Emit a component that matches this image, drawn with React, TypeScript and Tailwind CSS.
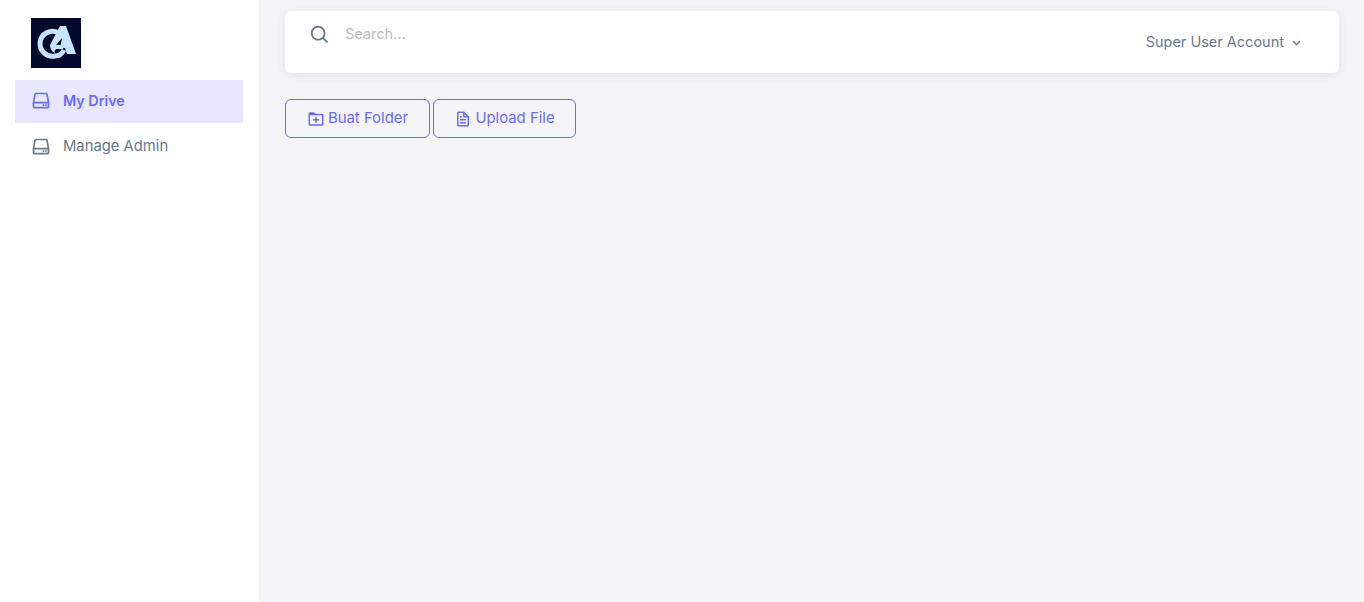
import { BiChevronDown, BiFile, BiFolderPlus, BiHdd, BiSearch } from 'react-icons/bi'

function Logo() {
  return (
    <div className="w-[50px] h-[50px] bg-[#03082e] ml-4">
      <svg viewBox="0 0 50 50" className="w-full h-full">
        <path d="M27 14.5 A12.5 12.5 0 1 0 24 38 C28 38 31 36 33 32" fill="none" stroke="#c8e4fb" strokeWidth="5" />
        <path d="M19 27 L33 27 L32 31 L27 31 C24 31 23 33 24 35 L22 34 C20 32 19 30 19 27 Z" fill="#c8e4fb" />
        <path d="M29 8 L35 8 L45 36 L36 36 L34 30 L29 30 L31 20 L25 27 L19 27 Z" fill="#c8e4fb" />
      </svg>
    </div>
  )
}

function SideItem({ label, active }: { label: string; active?: boolean }) {
  return (
    <a
      href="#"
      className={
        active
          ? 'flex items-center h-[43px] pl-[16px] pb-[2px] bg-[#e7e7ff] text-[#696cff] font-semibold text-[14.3px]'
          : 'flex items-center h-[43px] pl-[16px] pb-[2px] text-[#697a8d] text-[14.8px]'
      }
    >
      <BiHdd className="w-5 h-5 mr-[12px] mt-[1px]" />
      {label}
    </a>
  )
}

export default function App() {
  return (
    <div className="flex min-h-[602px] bg-[#f4f4f9] font-['Inter',sans-serif]">
      <aside className="w-[260px] shrink-0 bg-white pt-[18px] px-[15px] border-r border-[#f0f0f5]">
        <Logo />
        <nav className="mt-3 w-[228px] flex flex-col gap-[3px]">
          <SideItem label="My Drive" active />
          <SideItem label="Manage Admin" />
        </nav>
      </aside>

      <main className="flex-1 pl-[25px] pr-[25px] pt-[11px]">
        <header className="flex justify-between h-[62px] rounded-md bg-white shadow-[0_2px_8px_rgba(67,89,113,0.12)] pl-[24px] pr-[34px]">
          <div className="flex items-start pt-[12px]">
            <BiSearch className="w-[22px] h-[22px] text-[#697a8d] mr-[14px] mt-[1px]" />
            <input
              placeholder="Search..."
              className="text-[14.5px] w-[180px] h-5 mt-[1px] outline-none placeholder:text-[#b4bdc6]"
            />
          </div>
          <div className="flex items-center text-[14.5px] text-[#697a8d]">
            Super User Account
            <BiChevronDown className="w-[17px] h-[17px] ml-[4px]" />
          </div>
        </header>

        <div className="flex gap-[3px] mt-[26px]">
          <button className="flex items-center h-[39px] w-[145px] justify-center pb-px rounded-md border border-[#696cff] text-[#696cff] text-[14.9px]">
            <BiFolderPlus className="w-[18px] h-[18px] mr-[3px] mt-px" />
            Buat Folder
          </button>
          <button className="flex items-center h-[39px] w-[143px] justify-center pb-px rounded-md border border-[#696cff] text-[#696cff] text-[14.9px]">
            <BiFile className="w-[18px] h-[18px] mr-[3px] mt-px" />
            Upload File
          </button>
        </div>
      </main>
    </div>
  )
}
